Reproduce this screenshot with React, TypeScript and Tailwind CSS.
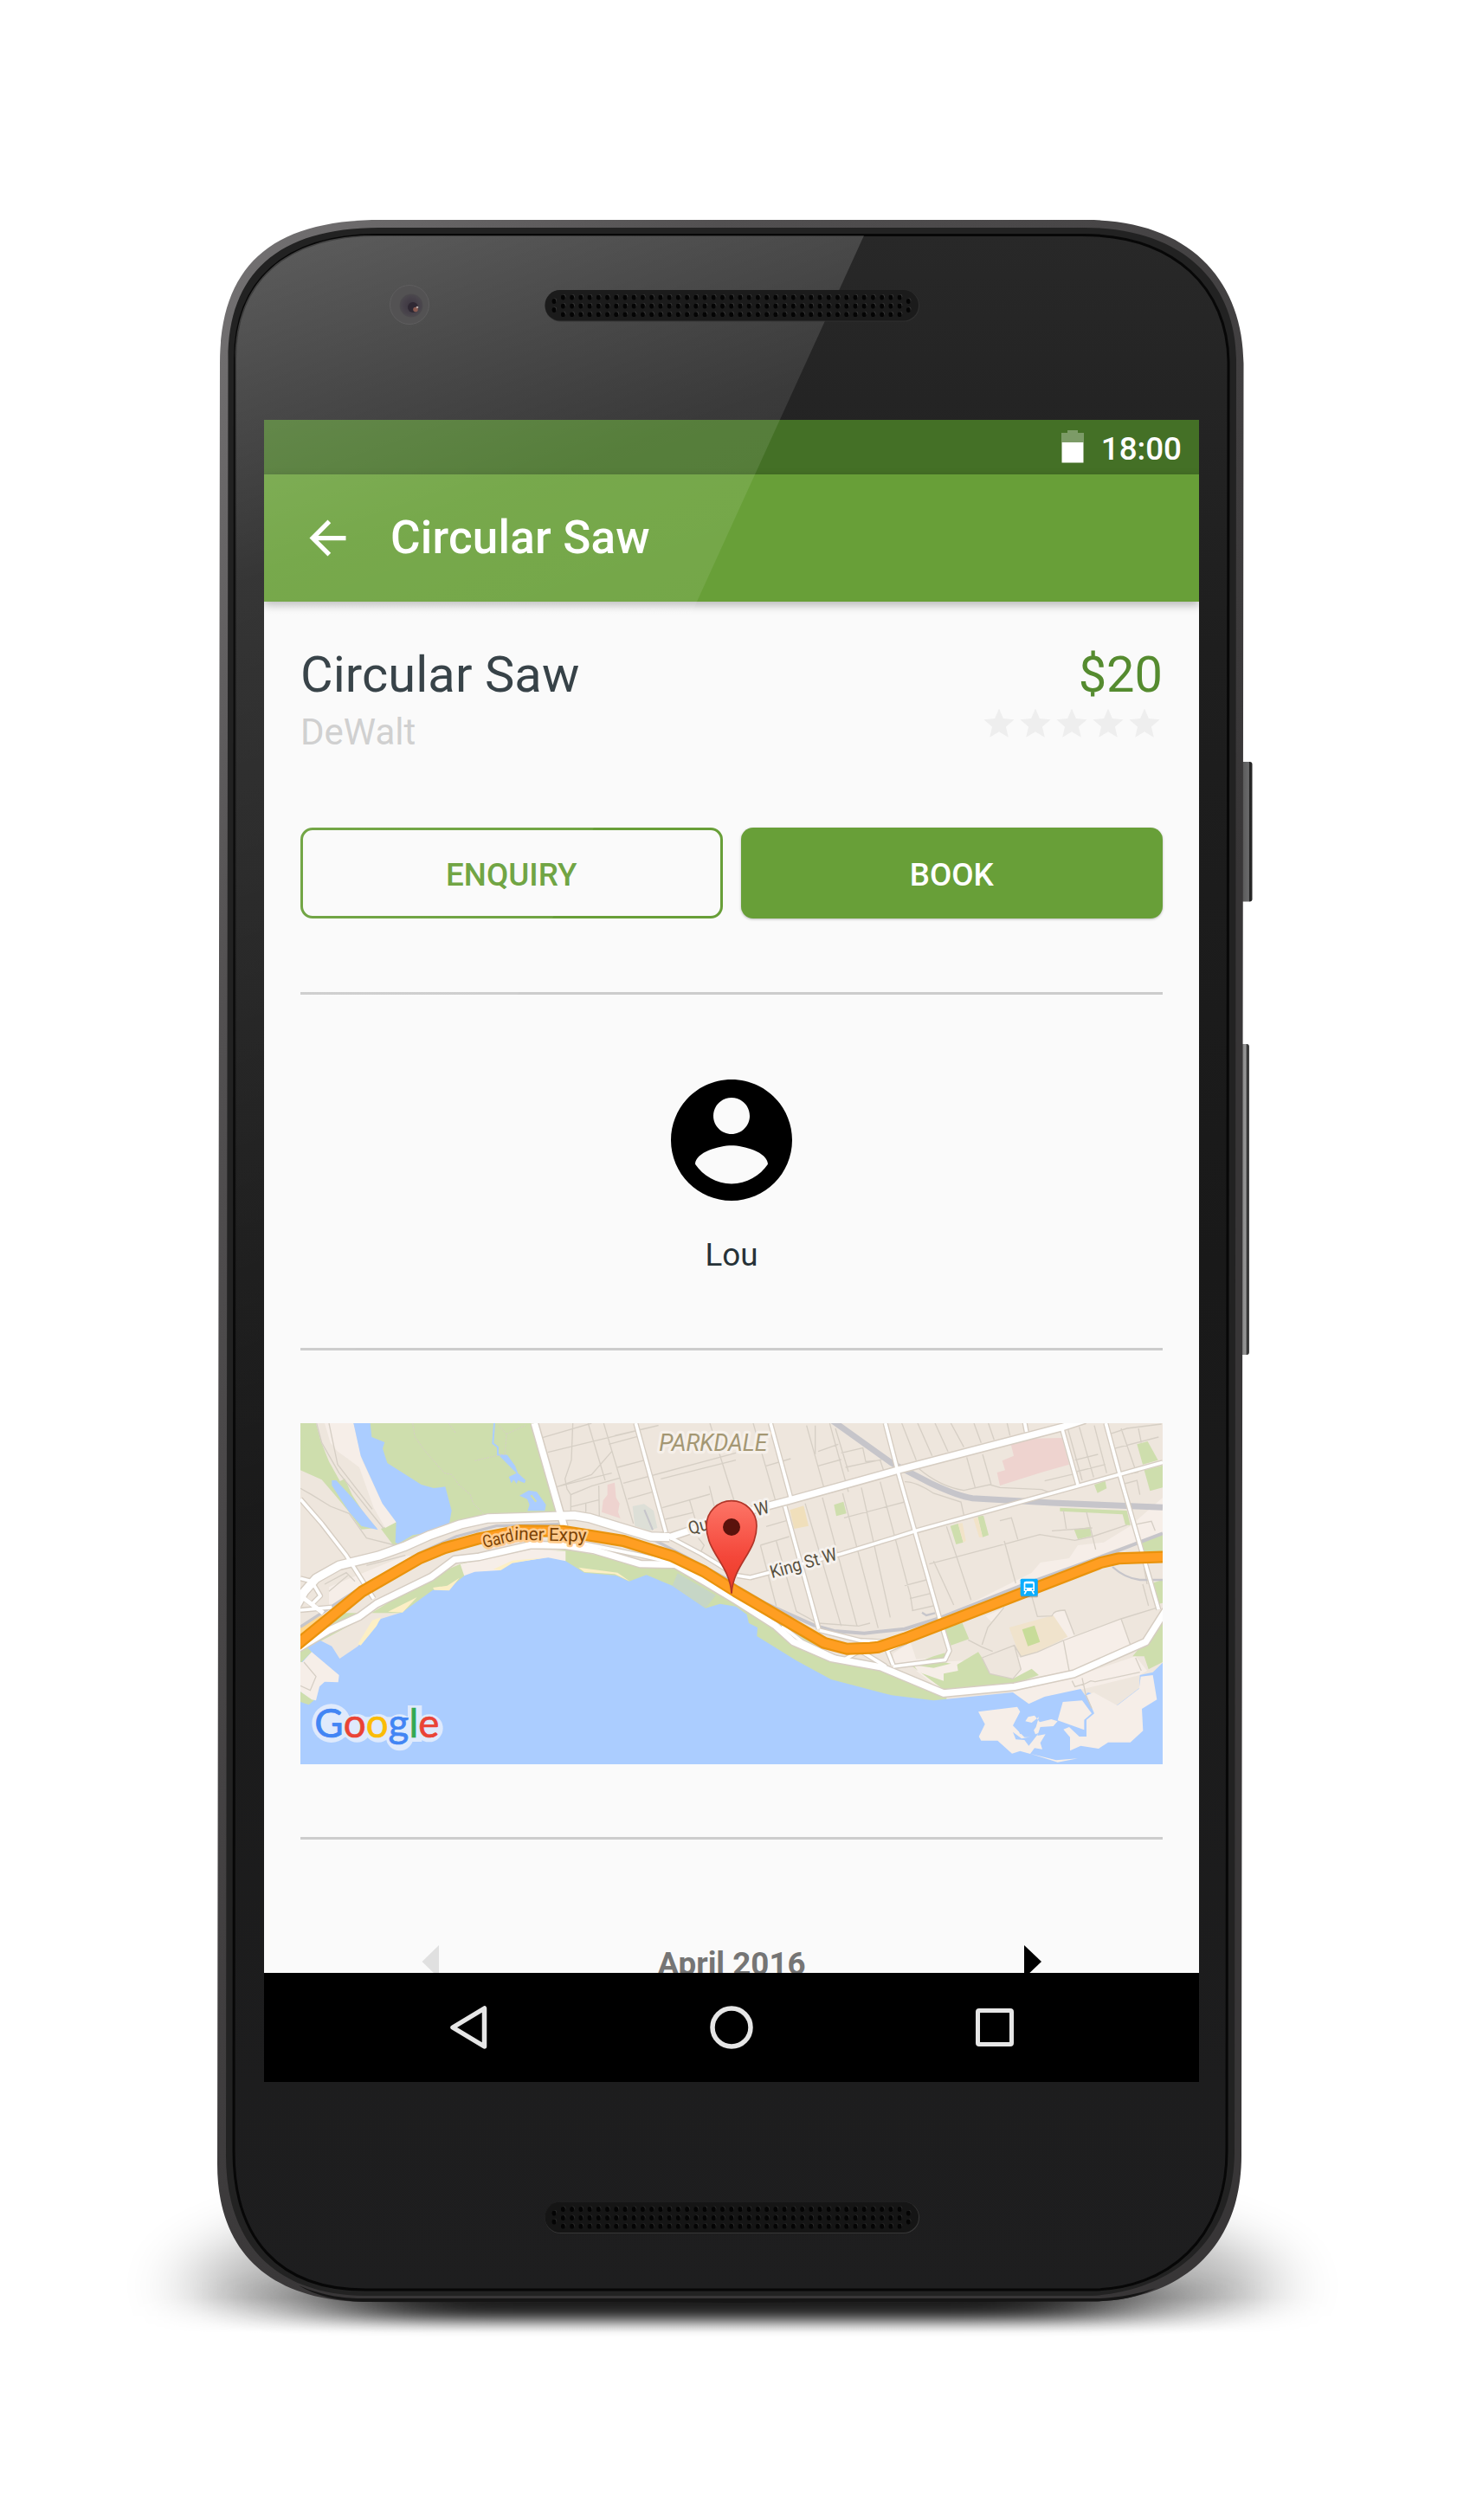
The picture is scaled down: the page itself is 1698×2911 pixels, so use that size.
import React from 'react';

const STAR = 'M12 17.27L18.18 21l-1.64-7.03L22 9.24l-7.19-.61L12 2 9.19 8.63 2 9.24l5.46 4.73L5.82 21z';
const ACCOUNT =
  'M12 2C6.48 2 2 6.48 2 12s4.48 10 10 10 10-4.48 10-10S17.52 2 12 2zm0 3c1.66 0 3 1.34 3 3s-1.34 3-3 3-3-1.34-3-3 1.34-3 3-3zm0 14.2c-2.5 0-4.71-1.28-6-3.22.03-1.99 4-3.08 6-3.08 1.99 0 5.97 1.09 6 3.08-1.29 1.94-3.5 3.22-6 3.22z';

const BODY =
  'M254 420C254 310 310 254 440 254H1255C1375 254 1436 325 1436.500 420L1434 2490C1434 2600 1360 2657 1263 2658.500L849 2660L420 2659C310 2657 251 2600 251 2500Z';
const BAND =
  'M263.500 415C263.500 317 320 263 438 263H1253C1368 263 1427 328 1428 415L1426 2488C1424 2592 1352 2646 1262 2652L420 2652C316 2650 261 2590 261 2490Z';
const GLASS =
  'M271.500 415C271.500 326 328 271.500 436 271.500H1250C1358 271.500 1418 334 1419 418L1417 2485C1417 2586 1348 2645 1260 2645H422C322 2645 270 2586 270 2485Z';

function Grille({ y, bottom }: { y: number; bottom?: boolean }) {
  const columns = Array.from({ length: 39 }, (_, i) => 650.4 + i * 10.23);
  const holes: [number, number][] = [
    [640, y + 12.5],
    [640, y + 22.5],
    [1049.3, y + 12.5],
    [1049.3, y + 22.5],
  ];
  columns.forEach((x) => [8, 18, 27.7].forEach((dy) => holes.push([x, y + dy])));
  return (
    <g>
      <rect x="629.500" y={y - 0.5} width="432.500" height="36.500" rx="18" fill={bottom ? '#3d3d3d' : '#333'} opacity="0.8" />
      <rect x="629.500" y={y - 0.5} width="431.500" height="35.500" rx="17.500" fill={bottom ? '#151515' : '#1b1b1b'} />
      {holes.map(([x, hy], i) => (
        <g key={i}>
          <circle cx={x + 0.8} cy={hy - 1} r="2.400" fill={bottom ? '#2c2c2c' : '#3a3a3a'} />
          <ellipse cx={x} cy={hy} rx="2.400" ry="2.900" fill="#040404" />
        </g>
      ))}
    </g>
  );
}

function DeviceFrame() {
  return (
    <svg className="absolute inset-0" width="1698" height="2911" viewBox="0 0 1698 2911" aria-hidden="true">
      <defs>
        <linearGradient id="rim" x1="254" y1="254" x2="1436" y2="1000" gradientUnits="userSpaceOnUse">
          <stop offset="0" stopColor="#757374" />
          <stop offset="0.35" stopColor="#525051" />
          <stop offset="1" stopColor="#383637" />
        </linearGradient>
        <linearGradient id="glass" x1="0" y1="271" x2="0" y2="2645" gradientUnits="userSpaceOnUse">
          <stop offset="0" stopColor="#282828" />
          <stop offset="0.2" stopColor="#1e1e1e" />
          <stop offset="0.5" stopColor="#191919" />
          <stop offset="1" stopColor="#1e1e1f" />
        </linearGradient>
        <linearGradient id="key" x1="0" x2="1" y1="0" y2="0">
          <stop offset="0" stopColor="#555" />
          <stop offset="0.7" stopColor="#6a6a6b" />
          <stop offset="0.75" stopColor="#222" />
          <stop offset="1" stopColor="#2a2a2a" />
        </linearGradient>
        <linearGradient id="keyLight" x1="0" x2="1" y1="0" y2="0">
          <stop offset="0" stopColor="#777" />
          <stop offset="0.65" stopColor="#999" />
          <stop offset="0.75" stopColor="#333" />
          <stop offset="1" stopColor="#444" />
        </linearGradient>
        <filter id="wide" x="-20%" y="-60%" width="140%" height="220%">
          <feGaussianBlur stdDeviation="42 30" />
        </filter>
        <filter id="low" x="-30%" y="-200%" width="160%" height="500%">
          <feGaussianBlur stdDeviation="80 9" />
        </filter>
        <linearGradient id="fade" x1="0" x2="0" y1="2655" y2="2695" gradientUnits="userSpaceOnUse">
          <stop offset="0" stopColor="#fff" />
          <stop offset="1" stopColor="#000" />
        </linearGradient>
        <mask id="floor" maskUnits="userSpaceOnUse" x="0" y="2300" width="1698" height="611">
          <rect x="0" y="2300" width="1698" height="611" fill="url(#fade)" />
        </mask>
      </defs>
      <g mask="url(#floor)">
        <ellipse cx="846" cy="2640" rx="625" ry="110" fill="#000" opacity="0.3" filter="url(#wide)" />
      </g>
      <rect x="400" y="2636" width="890" height="44" fill="#000" opacity="0.85" filter="url(#low)" />
      <rect x="1433" y="880" width="13.500" height="161.500" rx="3" fill="url(#key)" />
      <rect x="1432" y="1206" width="11" height="359" rx="3" fill="url(#keyLight)" />
      <path d={BODY} fill="url(#rim)" />
      <path d="M345 2640C375 2653 400 2655 420 2655H1263C1290 2655 1315 2650 1335 2643C1310 2655 1290 2658 1263 2658.500L849 2660L420 2659C390 2658 365 2652 345 2640Z" fill="#151515" />
      <path d={BAND} fill="#222" />
      <path d={GLASS} fill="url(#glass)" stroke="#070707" strokeWidth="3" />
    </svg>
  );
}

/* Diagonal reflection crossing the upper left of the glass, with the details that sit above it. */
function FrontDetails() {
  return (
    <svg className="pointer-events-none absolute inset-0 z-20" width="1698" height="2911" viewBox="0 0 1698 2911" aria-hidden="true">
      <defs>
        <linearGradient id="glare" x1="271" y1="271" x2="738" y2="1606" gradientUnits="userSpaceOnUse">
          <stop offset="0" stopColor="#fff" stopOpacity="0.25" />
          <stop offset="0.15" stopColor="#fff" stopOpacity="0.165" />
          <stop offset="0.27" stopColor="#fff" stopOpacity="0.1" />
          <stop offset="0.5" stopColor="#fff" stopOpacity="0.070" />
          <stop offset="1" stopColor="#fff" stopOpacity="0" />
        </linearGradient>
        <clipPath id="glassClip">
          <path d={GLASS} />
        </clipPath>
        <radialGradient id="lens">
          <stop offset="0" stopColor="#3c3540" />
          <stop offset="0.75" stopColor="#48434b" />
          <stop offset="1" stopColor="#4c4a4d" />
        </radialGradient>
      </defs>
      <path d="M271 272H998L271 1865Z" fill="url(#glare)" clipPath="url(#glassClip)" />
      <Grille y={335.5} />
      <Grille y={2544} bottom />
      <circle cx="473" cy="352" r="22.500" fill="#535253" stroke="#5f5e5f" strokeWidth="1" />
      <circle cx="475" cy="353" r="13.500" fill="url(#lens)" />
      <circle cx="477" cy="355" r="6" fill="#2f2833" />
      <circle cx="480" cy="357.500" r="2.800" fill="#8a5a50" />
      <circle cx="482" cy="355" r="1.300" fill="#b5a5a2" />
    </svg>
  );
}

const MINOR =
  'M860 92L1030 42M878 143L1262 50M910 262L1100 215M958 290L1030 260 1127 232M958 332L1055 308M1090 115L1200 85M1120 195L1215 170M1140 250L1530 145M1155 305L1250 278M1270 235L1530 170M1275 335L1440 288M1285 375L1380 352M965 42L960 170 938 235 945 270 958 290V350M1018 42L1077 240M1072 42L1175 390M1100 140L1030 220 912 262M1010 320V350M1055 258L1057 370M1110 85L1260 50M1440 42L1530 330M1438 260L1455 330M1370 310L1395 395M21 268L60 290 125 330 190 355 250 440 350 465M77 42L95 110 155 215 310 408M120 42L150 185 270 340M250 535L385 500M105 600L180 560 210 590M1400 440L1420 465 1410 485M120 625L185 570';
const MINOR_R =
  'M120 190L205 165M300 140L370 115M300 190L380 168M75 42L155 320M260 50L320 265M340 42L405 280M290 50L290 150M360 60L405 210M380 145L455 128 465 175 515 170 530 215M395 195L520 168M590 42L640 170M645 42L695 155M705 42L750 140M760 42L805 125M840 42L865 110M890 42L910 100M955 42L965 85M815 160L845 268M870 150L900 255M450 265L550 715M515 245L620 640 628 692M385 285L508 752M315 300L435 745M255 320L380 745M390 370L600 315M120 400L190 380M100 465L200 435M100 465L155 675M155 450L225 695 300 735 440 745 480 735M600 605L675 585M618 650L690 632M625 692L700 675M685 530L780 505 950 460 1068 428 1190 448 1250 435 1370 395M745 400L830 655M700 520L770 672M945 450L985 597M930 380L970 370 992 445M1110 415L1250 405M1150 345L1160 408M1230 350L1262 480M1085 242L1200 215M1165 60L1215 240M1205 55L1255 230M1257 50L1300 215M1190 170L1270 150M1195 210L1295 185M1310 80L1370 60 1490 45M1325 130L1480 90M1350 60L1400 205M1410 60L1420 110M1355 220L1410 212M1350 255L1405 240 1415 290M600 245Q640 245 700 285L795 315 805 360M650 200Q720 260 805 275L895 255 930 265 1075 272 1110 285M1040 640L1060 712 1110 710Q1115 690 1155 690L1188 775M868 810L888 750 945 680M820 793L868 818 905 833M868 855L980 812 1003 850M868 855L895 910 975 928 1003 895 980 812M1000 852L1060 835 1150 795 1350 720 1480 680M1350 720L1382 810M1150 795L1172 910M1180 935L1190 955 1225 945 1245 935 1260 938 1415 905M1215 925L1228 985 1248 1030M1400 855L1420 900M1390 395L1455 382 1468 415M1425 600L1445 675M1430 545L1440 600';

function MapView() {
  return (
    <svg className="mt-[84px] block h-[394px] w-full" viewBox="21 42 2988 1182" preserveAspectRatio="none" role="img" aria-label="Map">
      <defs>
        <linearGradient id="pin" x1="0" x2="0" y1="0" y2="1">
          <stop offset="0" stopColor="#fd7567" />
          <stop offset="0.6" stopColor="#f4473a" />
          <stop offset="1" stopColor="#ea3a25" />
        </linearGradient>
      </defs>
      <rect x="21" y="42" width="2988" height="1182" fill="#eee6dd" />

      {/* parks and pale ground, west side */}
      <g fill="#cedead">
        <path d="M21 42H75L92 105 120 175 158 243 175 235 200 290 245 360 285 405 232 410 190 350 140 290 95 238 21 205Z" />
        <path d="M205 42H820L925 352 780 360 665 362 560 395 450 440 345 468 300 408 353 385Z" />
        <path d="M40 825L225 725 480 570 600 520 940 480 1320 545 1530 665 1720 740 1860 850 2100 900 2260 980 2260 1040H1530L1300 700H150Z" />
      </g>
      <g fill="#f6eee8">
        <path d="M105 42H205L235 170 305 320 353 385 315 405 275 335 225 195 185 165 150 140 125 110Z" />
        <path d="M575 530L820 480 940 485V530L590 575Z" />
        <path d="M120 610L385 500 440 505 120 680Z" />
      </g>
      <path d="M21 745L100 705 80 730 21 775Z" fill="#ffd890" />
      <g fill="#abcdff">
        <path d="M205 42H263L268 90 313 108 306 130 322 180 440 255 483 267 523 262 545 345 537 390 440 425 410 430 360 460 350 455 353 385 305 320 230 155Z" />
        <path d="M130 240H145L200 300 290 412 232 398 190 350 130 258Z" />
        <path d="M703 148L738 152 765 190 775 215 802 240 798 250 775 240 770 252 760 238 752 250 743 228 770 215 735 180Z" />
        <path d="M780 293L812 275 840 280 872 325 868 346H808L815 325 807 305Z" />
      </g>
      <path d="M693 42L688 112 705 125V155" fill="none" stroke="#abcdff" strokeWidth="6" />
      <path d="M820 292L838 314" stroke="#cedead" strokeWidth="7" />
      <path d="M410 42L418 90 450 135 520 215 545 220 570 255 610 290 620 320 660 360M625 172L700 155 730 150 735 80 705 45M735 80L800 50M535 42L558 75" fill="none" stroke="#d6cfc5" strokeWidth="3" strokeDasharray="7 4" />
      <path d="M1085 255L1110 248 1115 300 1127 320 1122 350 1130 372 1065 350 1070 310 1085 290Z" fill="#eed3cf" />
      <path d="M1172 330L1212 322 1245 345 1258 405 1230 415 1180 398Z" fill="#dddfd7" />
      <path d="M1213 342L1242 412" stroke="#c6c5ca" strokeWidth="6" />

      {/* parks and blocks, east side */}
      <g transform="translate(1515 0)">
        <path d="M968 115L1040 95 1145 93 1170 185 1075 212 930 258 920 213 948 205 938 172 978 155Z" fill="#eed3cf" />
        <path d="M202 343L250 328 267 398 217 408Z" fill="#f0dfbb" />
        <g fill="#f6eee8">
          <path d="M1040 560L1070 525 1170 510 1200 465 1290 455 1380 400 1494 300V420L1300 490 1010 605 740 708 800 680Z" />
          <path d="M880 710L950 680 900 730Z M1110 700L1155 690 1188 778 1150 795Z" />
          <path d="M560 840L620 800 750 770 755 860 560 885Z" />
          <path d="M720 870L1000 852 1350 720 1382 810 1180 900 735 975 640 900Z" />
          <path d="M970 975L1190 920 1400 850 1440 900 1415 915 1210 965 1085 990 1032 1015Z" />
        </g>
        <path d="M620 800L740 765 755 850 640 860Z" fill="#eee6dd" />
        <path d="M962 750L1115 708 1165 782 1060 835 1000 852Z" fill="#f0e3cc" />
        <g fill="#cedead">
          <path d="M355 325L388 314 398 355 363 364Z" />
          <path d="M758 398L785 390 803 455 778 462Z" />
          <path d="M853 365L873 362 891 430 870 437Z" />
          <path d="M1187 410L1242 402 1247 433 1200 444Z" />
          <path d="M1257 255L1295 243 1300 268 1268 284Z" />
          <path d="M1405 115L1442 105 1478 170 1425 185Z" />
          <path d="M1430 205L1494 188V265L1450 277Z" />
          <path d="M1420 450L1494 430V490H1425Z" />
          <path d="M1462 595L1494 585V665L1480 668Z" />
          <path d="M735 750L800 735 823 790 760 812Z" />
          <path d="M620 880L700 850 740 838 735 870 780 880 855 835 868 855 895 910 975 928 1040 893 1065 915 980 945 735 965Z" />
          <path d="M1390 850L1494 720V870L1445 895 1430 850Z" />
          <path d="M1138 335L1370 345 1382 395 1365 395 1355 358 1138 347Z" />
        </g>
        <path d="M700 890L780 870 785 900 735 910 735 935 650 905 630 880Z" fill="#f6eee8" />
        <path d="M1007 757L1050 743 1069 800 1027 815Z" fill="#c8dc99" />
        <path d="M868 855L980 812 1003 895 975 928 895 910Z" fill="#eee6dd" />
        <path d="M785 390L800 388 812 450 803 455ZM838 372L853 368 870 437 858 437Z" fill="#f2e3c8" />
      </g>

      {/* lake */}
      <path
        fill="#abcdff"
        d="M21 828L45 820 90 795 130 815 157 858 220 815 300 720 375 697 480 620 535 615 590 570 625 557 710 552 755 525 880 508 940 520 1005 560 1115 570 1160 590 1220 568 1310 605 1425 683 1475 668 1530 677 1568 705 1575 735 1605 750 1603 780 1740 865 1860 930 2070 985 2215 1003 2490 975 2545 1015 2600 990 2725 963 2740 985 2750 975 2770 980 2850 1020 2928 960 2930 915 2975 905 3009 872V1224H21Z"
      />
      <g fill="#fcefc5">
        <path d="M220 808L270 725 300 715 285 745 230 812ZM325 695L425 645 375 698ZM480 612L530 605 572 578 537 622 485 620ZM690 548L755 518 870 508 755 527 715 552ZM985 542L1120 560 1163 590 1110 565 1005 558Z" />
      </g>
      <path d="M1328 562L1460 638 1425 683 1310 605Z" fill="#c6d6c6" />
      <path d="M21 828L45 820 60 835 25 870H21Z M21 972L68 1003 50 1018 21 1008Z" fill="#cedead" />
      <path d="M28 870L60 835 155 915 152 940 105 938 87 955 75 1003 60 1000 21 972V870Z" fill="#f6eee8" />
      <path d="M33 870L75 920 55 968 21 952" fill="none" stroke="#d6cfc5" strokeWidth="4" />

      {/* Ontario Place islands */}
      <g transform="translate(1515 0)" fill="#f6eee8">
        <path d="M855 1042L990 1025 1000 1042 975 1090 1015 1130 1030 1130 1055 1095 1065 1060 1040 1080 1018 1075 1028 1060 1050 1055 1068 1078 1108 1068 1130 1075 1115 1092 1070 1095 1060 1125 1088 1120 1070 1150 1077 1172 1050 1168 1035 1188 1000 1178 972 1187 922 1142 865 1142 857 1128 878 1085Z" />
        <path d="M1148 1008L1215 1003 1248 1048 1222 1070V1105L1130 1072Z" />
        <path d="M1230 985L1255 975 1337 1020 1412 962 1418 920 1460 915 1474 1000 1422 1032 1426 1108 1382 1148H1305L1272 1170 1210 1160 1173 1177V1130L1150 1103 1170 1095 1205 1128H1230V1070L1257 1048Z" />
        <path d="M1035 1187L1125 1210 1200 1204 1130 1217Z" />
      </g>
      <path d="M2490 1112L2520 1135 2545 1130 2560 1100 2568 1120 2580 1115 2545 1160 2530 1140 2500 1138Z M2500 1085L2518 1065 2530 1110 2515 1120Z" fill="#abcdff" />

      {/* side streets */}
      <g fill="none" stroke="#d6cfc5" strokeWidth="4">
        <path d={MINOR} />
        <path d={MINOR_R} transform="translate(1515 0)" />
      </g>

      {/* railways */}
      <g fill="none" stroke="#c6c5ca">
        <path d="M1860 30L2070 180 2205 250Q2300 295 2350 302L2625 318 3009 334" strokeWidth="21" />
        <path d="M1515 598L1635 668 1800 742 1870 762 1975 770 2115 755 2240 716 2515 606 2815 498 3009 424" strokeWidth="12" />
        <path d="M21 748L240 605 435 492 560 435 700 398 920 392M1235 440L1515 590" strokeWidth="10" />
        <path d="M2835 540Q2880 580 2930 585H3009M2175 698L2190 708 2220 700" strokeWidth="7" />
      </g>

      {/* streets: casing, then white surface */}
      {['#d6cdc2', '#ffffff'].map((color, i) => (
        <g key={color} fill="none" stroke={color} strokeLinejoin="round">
          <g strokeWidth={i ? 11 : 19}>
            <path d="M21 305L95 390 180 500 275 650M1183 42L1287 420M1535 570L1580 577 1700 545 1895 495 2075 440 2155 415 3009 178" />
            <path d="M1650 42L1720 300M1700 330L1817 755M2048 42L2090 205 2235 715 2270 830 2255 862 2075 885M2660 60L2715 255M2812 42L2860 220 2995 688M2530 35L2537 72" />
            <path d="M1300 437L1410 495 1515 560M980 455L1200 500 1310 525M2075 880L2055 830 2120 800M1690 745L1760 800 1900 865 1960 830 2050 885M1820 760L1960 795 2050 800M21 690L130 680M21 580L60 590 90 640 60 670" />
          </g>
          <g strokeWidth={i ? 22 : 31}>
            <path d="M832 42L920 350 935 400" />
            <path d="M1300 437L1420 397 1515 362 1720 308 2090 205 2660 56 2740 30" />
            <path d="M10 825L115 762 225 712 285 668 475 575 555 515 640 505 820 464 940 466 1040 482 1200 530 1320 532 1420 590 1530 656 1665 742 1730 800 1860 856 2035 888 2250 978 2495 955 2700 911 2950 800 3020 690" />
          </g>
          <g strokeWidth={i ? 28 : 36}>
            <path d="M10 670L35 625 75 580 155 535 290 502 380 470 470 430 575 393 670 372 800 368 970 362 1020 370 1135 405 1235 435 1300 437" />
          </g>
          <path d="M21 640L100 700" strokeWidth={i ? 15 : 18} />
        </g>
      ))}

      {/* expressway */}
      <g fill="none" strokeLinejoin="round">
        {['#e9930d', '#ff9e22'].map((color, i) => (
          <path
            key={color}
            stroke={color}
            strokeWidth={i ? 29 : 42}
            d="M0 817L235 625 435 510 520 475 635 443 780 415 930 416 1140 450 1310 503 1420 556 1530 625 1835 803 1915 824 1995 821 2025 818 2115 788 2795 525 2855 511 3020 505"
          />
        ))}
      </g>

      {/* labels */}
      <g fontFamily="Roboto, sans-serif" paintOrder="stroke" strokeLinejoin="round">
        <text x="1264" y="137" fontSize="84" fontStyle="italic" fill="#a49773" stroke="#f6f0ea" strokeWidth="20" textLength="375" lengthAdjust="spacingAndGlyphs">
          PARKDALE
        </text>
        <text transform="translate(1372 428) rotate(-15.5)" fontSize="62" fill="#57503f" stroke="#f6f2ee" strokeWidth="18" textLength="288" lengthAdjust="spacingAndGlyphs">
          Queen St W
        </text>
        <text transform="translate(1655 580) rotate(-16)" fontSize="62" fill="#57503f" stroke="#f6f2ee" strokeWidth="18" textLength="238" lengthAdjust="spacingAndGlyphs">
          King St W
        </text>
        <text transform="translate(658 475) rotate(-14)" fontSize="60" fill="#7b4204" stroke="#ffcb8c" strokeWidth="16" textLength="108" lengthAdjust="spacingAndGlyphs">
          Gard
        </text>
        <text transform="translate(762 446) rotate(1.500)" fontSize="63" fill="#7b4204" stroke="#ffcb8c" strokeWidth="16" textLength="250" lengthAdjust="spacingAndGlyphs">
          iner Expy
        </text>
      </g>

      {/* transit stop */}
      <g transform="translate(1515 0)">
        <rect x="1002" y="585" width="60" height="61" rx="5" fill="#7b7466" opacity="0.5" />
        <rect x="1001" y="581" width="60" height="60" rx="5" fill="#0aaeff" />
        <path d="M1021 590H1043Q1050 590 1050 597V624H1013V597Q1013 590 1021 590Z" fill="#fff" />
        <path d="M1018 598H1045V612H1018Z" fill="#0aaeff" />
        <circle cx="1020" cy="618" r="3" fill="#0aaeff" />
        <circle cx="1043" cy="618" r="3" fill="#0aaeff" />
        <path d="M1021 624L1015 634M1042 624L1048 634" stroke="#fff" strokeWidth="5" />
      </g>

      {/* marker */}
      <path
        d="M1515 632C1508 530 1428 490 1428 398A87 87 0 0 1 1602 398C1602 490 1522 530 1515 632Z"
        fill="url(#pin)"
        stroke="#b13528"
        strokeWidth="5"
      />
      <circle cx="1515" cy="402" r="30" fill="#5a120c" />

      {/* attribution on a pale backing */}
      <g fill="#dfeafc">
        <circle cx="128" cy="1082" r="67" />
        <circle cx="217" cy="1099" r="49" />
        <circle cx="291" cy="1099" r="49" />
        <circle cx="365" cy="1099" r="48" />
        <circle cx="365" cy="1130" r="47" />
        <rect x="393" y="1020" width="49" height="126" />
        <circle cx="467" cy="1099" r="48" />
        <rect x="125" y="1060" width="340" height="70" />
      </g>
      <text
        x="70"
        y="1130"
        fontFamily="Lato, sans-serif"
        fontSize="138"
        strokeWidth="2"
        textLength="432"
        lengthAdjust="spacingAndGlyphs"
      >
        <tspan fill="#4285f4" stroke="#4285f4">G</tspan>
        <tspan fill="#ea4335" stroke="#ea4335">o</tspan>
        <tspan fill="#fbbc05" stroke="#fbbc05">o</tspan>
        <tspan fill="#4285f4" stroke="#4285f4">g</tspan>
        <tspan fill="#34a853" stroke="#34a853">l</tspan>
        <tspan fill="#ea4335" stroke="#ea4335">e</tspan>
      </text>
    </svg>
  );
}

function Divider({ className }: { className: string }) {
  return <div className={`h-[3px] w-full shrink-0 bg-[#cccccc] ${className}`} />;
}

function StatusBar() {
  return (
    <div className="flex h-[63px] shrink-0 items-start justify-end bg-[#447026] pr-[20px]">
      <svg className="mt-[12px] mr-[20px]" width="26" height="38" viewBox="0 0 26 38">
        <path d="M7 0H19V3H26V14H0V3H7Z" fill="#fff" opacity="0.3" />
        <path d="M0.500 14H25.500V37.500H0.500Z" fill="#fff" />
      </svg>
      <span className="mt-[12px] text-[36.75px] leading-[43px] font-medium text-white">18:00</span>
    </div>
  );
}

function AppBar() {
  return (
    <header className="relative z-10 flex h-[147px] shrink-0 items-center bg-[#689f38] pl-[42px] shadow-[0_4px_10px_rgba(0,0,0,0.28)]">
      <svg width="63" height="63" viewBox="0 0 24 24" fill="#fff">
        <path d="M20 11H7.830l5.590-5.590L12 4l-8 8 8 8 1.410-1.410L7.830 13H20v-2z" />
      </svg>
      <h1 className="mb-[2px] ml-[41px] text-[53px] leading-[62px] font-medium tracking-[0.2px] text-white">Circular Saw</h1>
    </header>
  );
}

function NavBar() {
  return (
    <nav className="flex h-[126px] shrink-0 items-center bg-black pl-[210px]">
      <svg width="52" height="60" viewBox="0 0 52 60" fill="none" stroke="#e6e6e6" strokeWidth="5.500" strokeLinejoin="round">
        <path d="M8 30L44.500 8V52Z" />
      </svg>
      <svg className="ml-[248px]" width="60" height="60" viewBox="0 0 60 60" fill="none" stroke="#e6e6e6" strokeWidth="5.500">
        <circle cx="30" cy="30" r="22" />
      </svg>
      <svg className="ml-[244px]" width="60" height="60" viewBox="0 0 60 60" fill="none" stroke="#e6e6e6" strokeWidth="5">
        <rect x="10.500" y="10.500" width="39" height="39" rx="1.500" />
      </svg>
    </nav>
  );
}

export default function App() {
  return (
    <div className="relative h-[2911px] w-[1698px] overflow-hidden bg-white pt-[485px] pl-[305px] font-['Roboto',sans-serif]">
      <DeviceFrame />
      <div className="relative flex h-[1920px] w-[1080px] flex-col overflow-hidden bg-[#fafafa]">
        <StatusBar />
        <AppBar />
        <main className="flex min-h-0 flex-1 flex-col overflow-hidden px-[42px]">
          <section className="flex h-[261px] shrink-0 justify-between pt-[50px]">
            <div>
              <h2 className="text-[57.75px] leading-[68px] tracking-[0.1px] text-[#263238]">Circular Saw</h2>
              <p className="mt-[8px] text-[42px] leading-[50px] text-[#cccccc]">DeWalt</p>
            </div>
            <div className="flex flex-col items-end">
              <span className="text-[57.75px] leading-[68px] text-[#558b2f]">$20</span>
              <div className="mt-[2px] flex">
                {[1, 2, 3, 4, 5].map((n) => (
                  <svg key={n} width="42" height="42" viewBox="0 0 24 24" fill="#eeeeee">
                    <path d={STAR} />
                  </svg>
                ))}
              </div>
            </div>
          </section>
          <div className="grid h-[105px] shrink-0 grid-cols-2 gap-[21px] text-[36.75px] font-medium">
            <button className="rounded-[14px] border-[3px] border-[#689f38] pt-[4px] text-[#689f38]">ENQUIRY</button>
            <button className="rounded-[14px] bg-[#689f38] pt-[4px] text-white shadow-[0_1px_3px_rgba(0,0,0,0.25)]">BOOK</button>
          </div>
          <Divider className="mt-[85px]" />
          <section className="mt-[84px] flex shrink-0 flex-col items-center">
            <svg width="168" height="168" viewBox="0 0 24 24" fill="#000">
              <path d={ACCOUNT} />
            </svg>
            <p className="mt-[27px] text-[36.75px] leading-[43px] text-[#263238]">Lou</p>
          </section>
          <Divider className="mt-[86px]" />
          <div className="shrink-0">
            <MapView />
          </div>
          <Divider className="mt-[84px]" />
          <div className="mt-[122px] flex shrink-0 items-start justify-between px-[140px]">
            <svg width="20" height="38" viewBox="0 0 20 38" fill="#e0e0e0">
              <path d="M20 0V38L0.500 19Z" />
            </svg>
            <span className="text-[36.75px] leading-[43px] font-bold text-[#757575]">April 2016</span>
            <svg width="20" height="38" viewBox="0 0 20 38" fill="#000">
              <path d="M0 0V38L20 19Z" />
            </svg>
          </div>
        </main>
        <NavBar />
      </div>
      <FrontDetails />
    </div>
  );
}
